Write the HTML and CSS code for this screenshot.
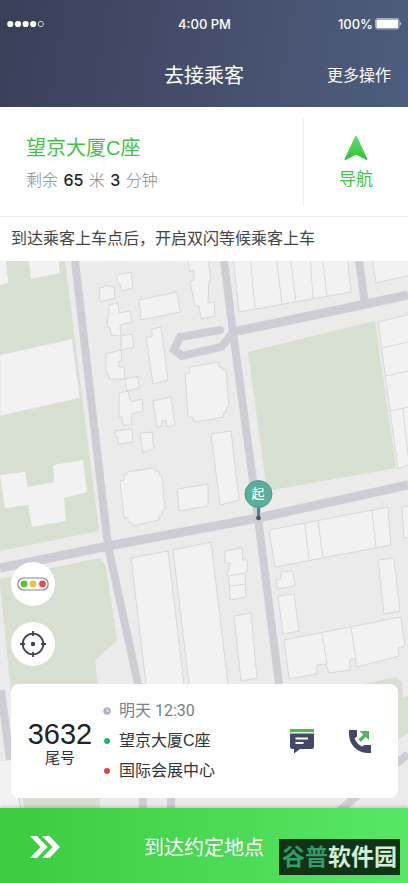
FILE: index.html
```html
<!DOCTYPE html>
<html lang="zh-CN">
<head>
    <meta charset="UTF-8">
    <meta name="viewport" content="width=device-width, initial-scale=1.0">
    <title>去接乘客</title>
    <link rel="stylesheet" href="styles.css">
</head>
<body>
    <header class="header">
        <div class="status-bar">
            <svg class="signal" width="38" height="8" viewBox="0 0 38 8" fill="#fff">
                <circle cx="3.3" cy="4" r="3.1"/>
                <circle cx="11" cy="4" r="3.1"/>
                <circle cx="18.6" cy="4" r="3.1"/>
                <circle cx="26.2" cy="4" r="3.1"/>
                <circle cx="33.8" cy="4" r="2.6" fill="none" stroke="#fff" stroke-width=".8"/>
            </svg>
            <span class="time">4:00 PM</span>
            <span class="battery">100%
                <svg width="27" height="12" viewBox="0 0 27 12">
                    <rect x=".5" y=".5" width="23.5" height="10.5" rx="1.8" fill="none" stroke="#fff" stroke-opacity=".7" stroke-width=".7"/>
                    <rect x="1.4" y="1.4" width="21.8" height="8.8" rx="1" fill="#fff"/>
                    <path d="M24.8 3.8q2 2 0 4z" fill="#fff"/>
                </svg>
            </span>
        </div>
        <div class="nav-bar">
            <h1>去接乘客</h1>
            <button class="more">更多操作</button>
        </div>
    </header>

    <section class="target">
        <div class="target-info">
            <h2>望京大厦C座</h2>
            <p>剩余 <b>65</b> 米 <b>3</b> 分钟</p>
        </div>
        <button class="navigate">
            <svg width="24" height="26" viewBox="0 0 24 26">
                <defs>
                    <linearGradient id="arrow" x1="0" y1="0" x2="0" y2="1">
                        <stop offset="0" stop-color="#5de06a"/>
                        <stop offset="1" stop-color="#35bf3c"/>
                    </linearGradient>
                </defs>
                <path d="M12 .8q.6 0 .9.8l10.500 22.400q.6 1.700-1 1L12 19.800 1.600 25q-1.600.7-1-1L11.100 1.600q.3-.8.9-.8z" fill="url(#arrow)"/>
            </svg>
            导航
        </button>
    </section>
    <p class="tip">到达乘客上车点后，开启双闪等候乘客上车</p>

    <main class="map">
        <svg class="map-canvas" viewBox="0 261 408 547" preserveAspectRatio="xMidYMid slice">
            <rect y="261" width="408" height="547" fill="#ebebeb"/>
            <!-- parks -->
            <g fill="#d6dfd0">
                <path d="M0 261H65L99 531 0 551z"/>
                <path d="M248 352L375 321 396 468 267 491z"/>
                <path d="M0 579L100 558 106 567 117 641 95 660 100 700V808H16L0 650z"/>
                <path d="M362 684L396 677 402 682 403 697 408 696V733L360 765z"/>
            </g>
            <path d="M0 585L16 740 24 808H0z" fill="#ebebeb"/>
            <!-- roads -->
            <g fill="none" stroke="#cecdd6" stroke-width="8">
                <path d="M75 261L108 546 138 684 156 760"/>
                <path d="M224 261L233 332 258 518 279 684 286 760"/>
                <path d="M0 568L108 546 258 518 408 485" stroke-width="9"/>
                <path d="M233 332L366 304 408 295" stroke-width="9"/>
                <path d="M359 261L365 304"/>
                <path d="M233 333L221 347 182 356 174 350 180 337 220 330" stroke-linecap="round"/>
                <path d="M1 690L9 752 17 808M143 790V808M171 790V808M340 810L408 754"/>
            </g>
            <!-- white blocks inside the parks -->
            <g fill="#f2f2f2">
                <path d="M0 261H6L8 283 0 285zM29 261H59L60 273 31 279z"/>
                <path d="M0 355L72 339 80 398 0 416z" stroke="#e2e1e6"/>
                <path d="M0 475L25 472 28 487 54 482 53 465 83 460 87 492 64 498 66 521 32 527 28 505 5 508z"/>
                <path d="M0 761L12 760 20 808H0z"/>
            </g>
            <!-- buildings -->
            <g fill="#f2f2f2" stroke="#d7d6dd" stroke-width="1">
                <path d="M117 275L131 272 133 288 122 291 120 284 117 281zM99 288L104 287 105 285 109 286 114 287 115 298 100 302z"/>
                <path d="M109 305L118 303 119 313 130 311 132 322 120 325 121 336 111 335 110 328 107 327 108 315 109 315z"/>
                <path d="M121 336L132 334 134 347 121 350zM106 354L121 350 122 361 118 362 119 367 124 367 125 379 110 379 106 370z"/>
                <path d="M125 379L138 376 139 388 127 391zM119 393L128 391 131 402 142 399 143 411 131 414 132 425 123 425 122 417 119 417z"/>
                <path d="M115 431L132 429 133 442 118 444 118 437 115 436zM140 433L152 432 154 449 143 453z"/>
                <path d="M139 300L177 292 180 312 141 320zM146 337L152 337 152 329 161 327 168 380 153 384zM153 401L171 397 175 425 167 427 166 420 162 421 162 426 157 427z"/>
                <path d="M187 255L190 272 194 270 194 280 190 281 195 306 199 306 201 319 215 316 214 302 208 303 209 281 211 280 209 265V255z"/>
                <path d="M185 374L190 373 189 367 219 362 219 367 222 367 222 370 226 370 229 407 226 408 226 412 223 413 223 417 219 418 194 422 193 418 188 416z"/>
                <path d="M120 481L124 480 124 475 127 474 127 472 154 468 155 471 159 471 159 475 162 476 165 509 162 511 162 515 159 516 159 520 133 526 132 523 128 522 128 518 124 517z"/>
                <path d="M177 489L208 484 208 506 179 511zM211 434L231 431 239 500 220 505z"/>
                <path d="M233 255L239 312 351 292 347 255M250 255L255 309M276 255L282 304M290 255L296 302M310 255L313 299M322 255L327 297M372 255L376 283 415 274V255z"/>
                <path d="M378 322L415 313V462L398 469zM382 348L408 342M386 376L408 371M390 411L408 407M403 408L408 455"/>
                <path d="M131 558L168 551 184 684 190 760H154L146 684zM173 550L211 542 228 684 234 760H196L189 684z"/>
                <path d="M225 551L242 548 243 560 247 560 248 571 245 573 246 597 230 600 229 576 227 575 230 563 225 563zM228 576L246 573M230 586L246 584M234 616L251 613 257 678 241 681z"/>
                <path d="M269 530L388 507 391 545 275 567zM305 524L309 561M318 521L323 558M372 510L376 548M402 507L415 505V537L404 538z"/>
                <path d="M276 580L281 579 281 572 293 571 295 586 278 589zM278 596L294 594 299 631 283 634zM378 560L394 558 400 611 384 614z"/>
                <path d="M284 640L401 617 405 646 398 648 399 656 357 667 355 659 350 659 350 670 329 673 326 664 317 665 317 674 289 679zM322 634L327 664M351 628L356 660"/>
            </g>
            <!-- pick-up pin -->
            <path d="M258.500 505V517" stroke="#438e82" stroke-width="3"/>
            <circle cx="258.500" cy="518" r="2.300" fill="#3e5961"/>
            <circle cx="258.500" cy="494" r="13.500" fill="#56b09a" stroke="#438e82" stroke-width=".8"/>
            <text class="pin-text" x="258" y="498" text-anchor="middle">起</text>
        </svg>

        <div class="overlay">
            <button class="round-btn" aria-label="路况">
                <svg width="32" height="14" viewBox="0 0 32 14">
                    <rect x=".8" y="1" width="30.400" height="12" rx="6" fill="#fff" stroke="#8a8488" stroke-width="1.200"/>
                    <circle cx="7" cy="7" r="3.400" fill="#56c13b"/>
                    <circle cx="16" cy="7" r="3.400" fill="#e7c448"/>
                    <circle cx="25.500" cy="7" r="3.400" fill="#e24a55"/>
                </svg>
            </button>
            <button class="round-btn" aria-label="定位">
                <svg width="28" height="28" viewBox="0 0 28 28" fill="none" stroke="#42444d" stroke-width="1.800">
                    <circle cx="14" cy="14" r="10.300"/>
                    <path d="M14 1V6M14 22V27M1 14H6M22 14H27"/>
                    <circle cx="14" cy="14" r="2.200" fill="#42444d" stroke="none"/>
                </svg>
            </button>

            <section class="order">
                <div class="phone-tail">
                    <strong>3632</strong>
                    <span>尾号</span>
                </div>
                <ul class="route">
                    <li class="when">
                        <svg width="8" height="8" viewBox="0 0 8 8">
                            <circle cx="4" cy="4" r="3.700" fill="#a9b5c1"/>
                            <path d="M4 1.800V4.300H6" fill="none" stroke="#fff" stroke-width=".9"/>
                        </svg>
                        明天 12:30
                    </li>
                    <li><i class="dot start"></i>望京大厦C座</li>
                    <li><i class="dot end"></i>国际会展中心</li>
                </ul>
                <div class="actions">
                    <button aria-label="发消息">
                        <svg width="26" height="26" viewBox="0 0 26 26">
                            <path d="M1 1H25V4.200H1z" fill="#4cb856"/>
                            <path d="M1 5.400H25V18.500Q25 21 22.500 21H11L5 25.500V21H3.500Q1 21 1 18.500z" fill="#414966"/>
                            <path d="M6.500 10.500H19M6.500 15H14.500" stroke="#fff" stroke-width="1.800"/>
                        </svg>
                    </button>
                    <button aria-label="打电话">
                        <svg width="26" height="26" viewBox="0 0 26 26">
                            <path d="M2 2H10V8.500L7.500 10.500Q9.500 15.500 15 18.500L17.500 17H24V25H20.500C9 24.500 2 15.500 2 6z" fill="#414966"/>
                            <path d="M12.500 3H22V12L18.800 8.900 13.800 13.800 11.400 11.400 16.200 6.500z" fill="#4cb856"/>
                        </svg>
                    </button>
                </div>
            </section>
        </div>
    </main>

    <button class="arrive">
        <svg width="30" height="24" viewBox="0 0 30 24" fill="#fff">
            <path d="M0 1H7L17.500 12 7 23H0L10.500 12z"/>
            <path d="M12 1H19.500L30 12 19.500 23H12L22.500 12z"/>
        </svg>
        <span>到达约定地点</span>
    </button>
    <div class="watermark"><em>谷普</em>软件园</div>
</body>
</html>
```

FILE: styles.css
```css
* {
    box-sizing: border-box;
    margin: 0;
    padding: 0;
}
body {
    display: flex;
    flex-direction: column;
    position: relative;
    min-height: 100vh;
    font-family: "Liberation Sans", "Noto Sans CJK SC", sans-serif;
    color: #333;
    background: #fff;
}
button {
    border: none;
    background: none;
    font-family: inherit;
    cursor: pointer;
}
svg {
    display: block;
}
.header {
    height: 107px;
    color: #fff;
    background: linear-gradient(100deg, #3a3f58, #4e5d7d);
}
.status-bar {
    display: grid;
    grid-template-columns: 1fr auto 1fr;
    align-items: center;
    height: 48px;
    padding: 0 6px 0 7px;
    font-family: Inter, sans-serif;
    font-size: 13px;
    font-weight: 500;
}
.battery {
    display: flex;
    justify-content: flex-end;
    align-items: center;
    gap: 2px;
}
.nav-bar {
    display: grid;
    grid-template-columns: 1fr auto 1fr;
    align-items: center;
    height: 52px;
    padding: 0 17px;
}
.nav-bar h1 {
    grid-column: 2;
    font-size: 20px;
    font-weight: 400;
}
.more {
    justify-self: end;
    font-size: 16px;
    color: #fff;
}
.target {
    display: flex;
    align-items: center;
    height: 110px;
    border-bottom: 1px solid #ececec;
}
.target-info {
    flex: 1;
    padding: 6px 0 0 26px;
}
.target-info h2 {
    font-size: 20px;
    font-weight: 400;
    line-height: 32px;
    color: #43c346;
}
.target-info p {
    font-size: 16px;
    font-weight: 300;
    line-height: 32px;
    color: #888;
}
.target-info b {
    margin: 0 1px;
    font-family: Inter, sans-serif;
    font-weight: 500;
    color: #222;
}
.navigate {
    display: flex;
    flex-direction: column;
    align-items: center;
    justify-content: center;
    gap: 7px;
    width: 105px;
    height: 88px;
    padding-top: 4px;
    border-left: 1px solid #eee;
    font-size: 17px;
    line-height: 24px;
    color: #43c346;
}
.tip {
    padding: 0 11px;
    font-size: 16px;
    line-height: 44px;
    color: #444;
}
.map {
    display: flex;
    flex: 1;
    position: relative;
}
.map-canvas {
    position: absolute;
    inset: 0;
    width: 100%;
    height: 100%;
}
.pin-text {
    font-size: 13px;
    font-weight: 500;
    fill: #fff;
}
.overlay {
    display: flex;
    flex: 1;
    flex-direction: column;
    justify-content: flex-end;
    gap: 16px;
    position: relative;
    padding: 0 10px 10px 11px;
}
.round-btn {
    display: flex;
    align-items: center;
    justify-content: center;
    width: 44px;
    height: 44px;
    border-radius: 50%;
    background: #fff;
}
.order {
    display: flex;
    align-items: center;
    height: 114px;
    margin-top: 2px;
    padding: 0 25px 0 16px;
    border-radius: 8px;
    background: #fff;
}
.phone-tail {
    display: flex;
    flex-direction: column;
    align-items: center;
    width: 66px;
    padding-top: 6px;
    font-size: 15px;
    line-height: 20px;
}
.phone-tail strong {
    font-size: 29px;
    font-weight: 400;
    line-height: 28px;
    color: #222;
}
.route {
    flex: 1;
    padding-left: 10px;
    list-style: none;
    font-size: 16px;
    line-height: 30px;
}
.route li {
    display: flex;
    align-items: center;
    gap: 8px;
}
.route .when {
    font-family: Roboto, "Noto Sans CJK SC", sans-serif;
    color: #748190;
}
.dot {
    width: 6px;
    height: 6px;
    margin: 0 1px;
    border-radius: 50%;
}
.start {
    background: #1cb568;
}
.end {
    background: #dc4343;
}
.actions {
    display: flex;
    gap: 32px;
}
.arrive {
    display: grid;
    grid-template-columns: 1fr auto 1fr;
    align-items: center;
    height: 75px;
    padding: 2px 30px 0;
    font-size: 20px;
    color: #fff;
    background: linear-gradient(90deg, #3ccb3f, #58e667);
    box-shadow: 0 -1px 4px rgba(0, 0, 0, 0.2);
    z-index: 1;
}
.watermark {
    position: absolute;
    right: 8px;
    bottom: 8px;
    z-index: 2;
    padding: 0 3px;
    font-size: 23px;
    font-weight: 700;
    line-height: 36px;
    color: #d3eed6;
    background: #123315;
}
.watermark em {
    font-style: normal;
    color: #2f9e6b;
}
```
